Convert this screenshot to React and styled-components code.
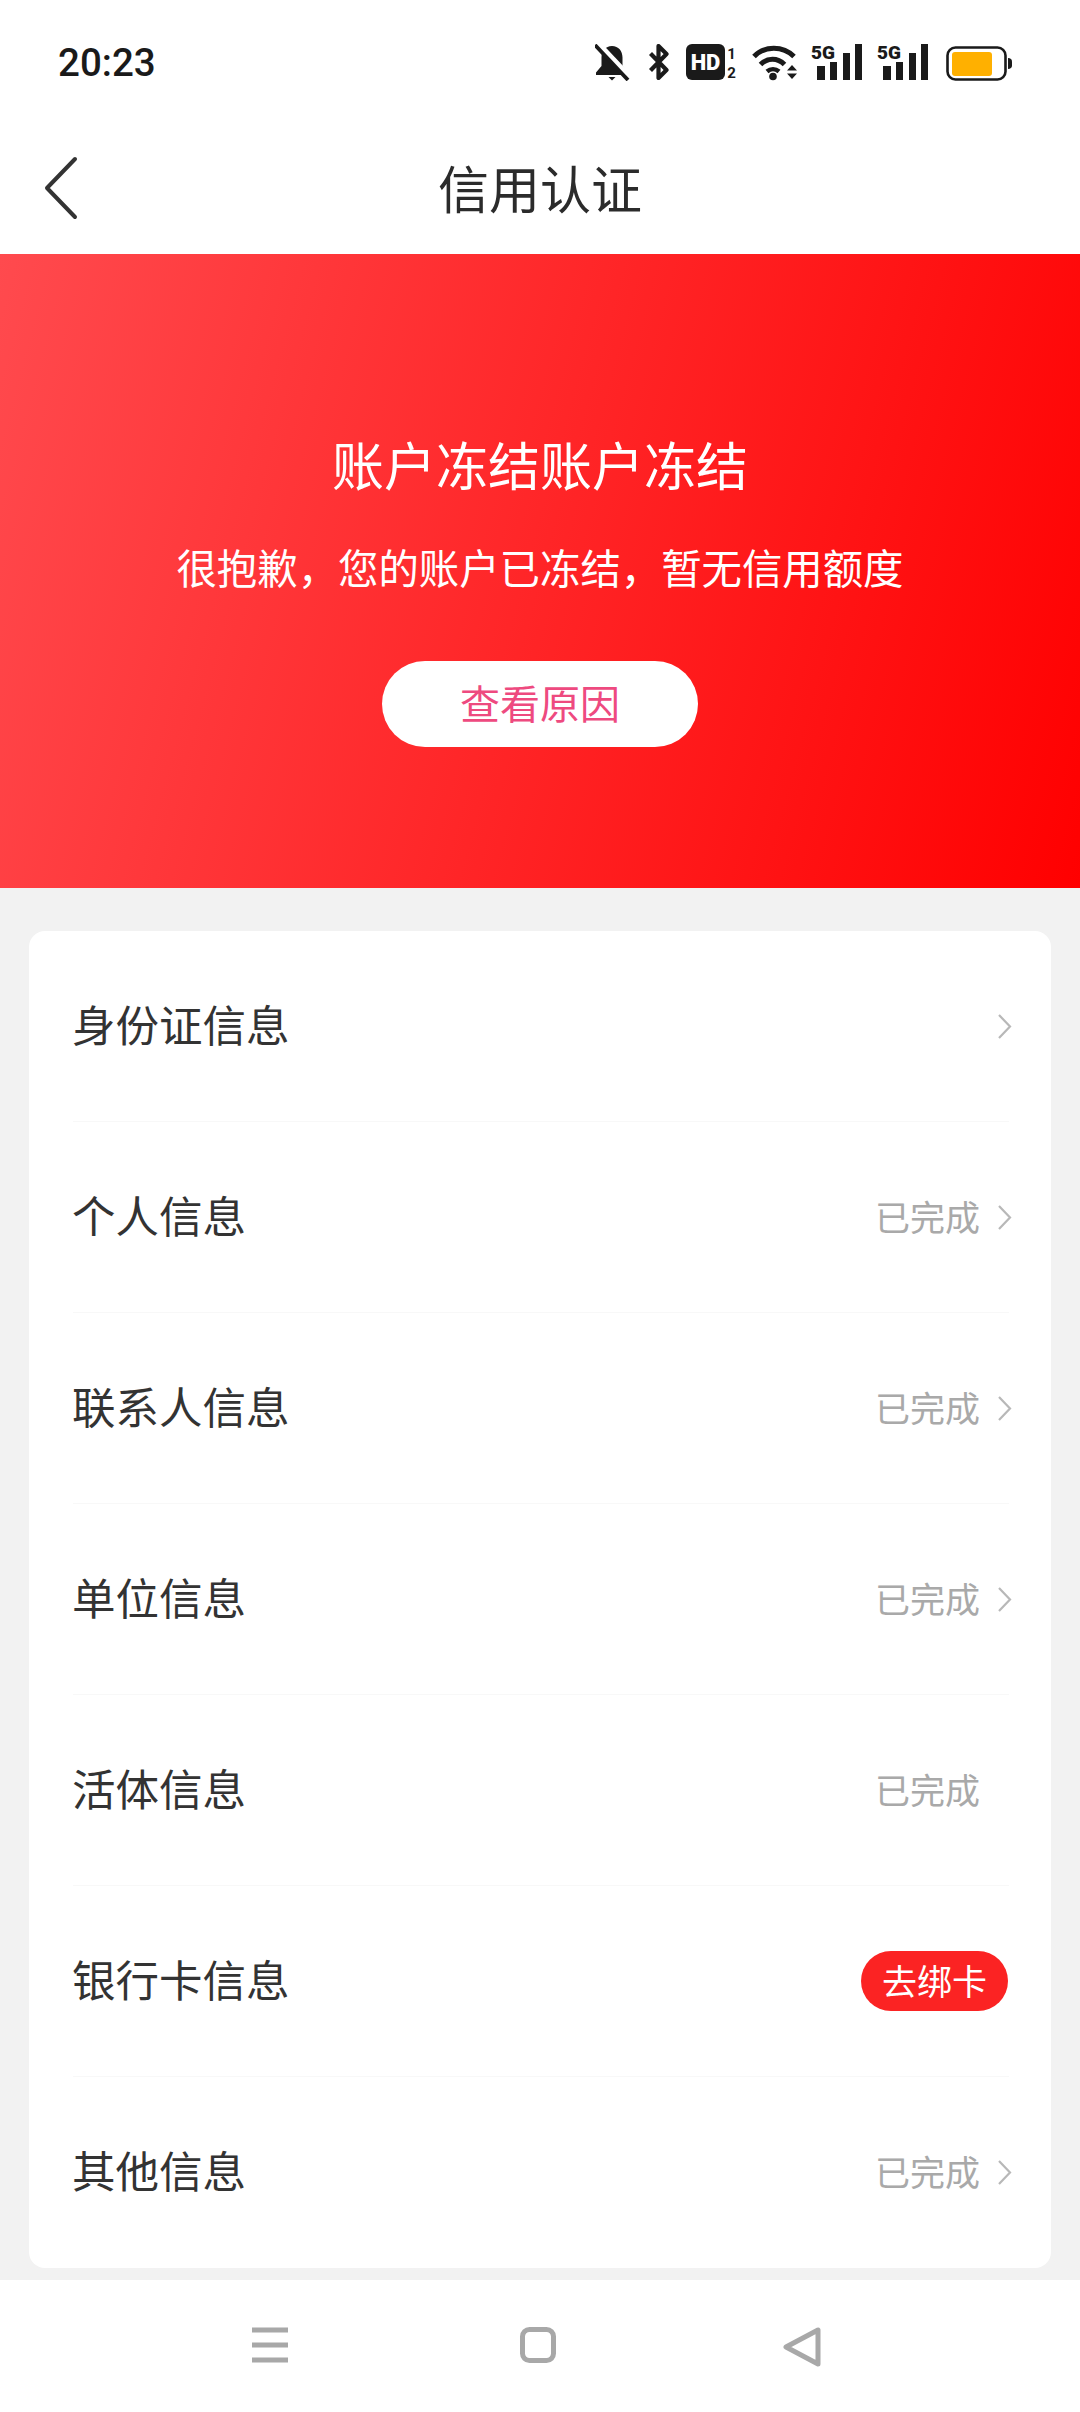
import React from "react";
import styled, { createGlobalStyle } from "styled-components";

const rows = [
  { label: "身份证信息", arrow: true },
  { label: "个人信息", value: "已完成", arrow: true },
  { label: "联系人信息", value: "已完成", arrow: true },
  { label: "单位信息", value: "已完成", arrow: true },
  { label: "活体信息", value: "已完成", arrow: false },
  { label: "银行卡信息", pill: "去绑卡" },
  { label: "其他信息", value: "已完成", arrow: true },
];

const GlobalStyle = createGlobalStyle`
  html, body {
    margin: 0;
    padding: 0;
    background: #f2f2f2;
  }
  * {
    box-sizing: border-box;
  }
`;

const Page = styled.div`
  width: 1080px;
  height: 2412px;
  display: flex;
  flex-direction: column;
  background: #f2f2f2;
  font-family: "Noto Sans CJK SC", "Noto Sans", sans-serif;
  overflow: hidden;
`;

const StatusBar = styled.div`
  height: 126px;
  flex: none;
  background: #fff;
  display: flex;
  justify-content: space-between;
  align-items: flex-start;
  padding: 39px 68px 0 58px;
`;

const Clock = styled.span`
  font-family: Roboto, "Liberation Sans", sans-serif;
  font-size: 38.5px;
  font-weight: 500;
  line-height: 48px;
  color: #1a1a1a;
`;

const StatusIcons = styled.div`
  display: flex;
  align-items: flex-start;
  margin-top: 5px;
`;

const StatusIcon = styled.svg`
  display: block;
  flex: none;
  margin-left: ${(p) => p.$gap || 0}px;
  margin-top: ${(p) => p.$lift || 0}px;
`;

const NavBar = styled.header`
  height: 128px;
  flex: none;
  background: #fff;
  position: relative;
  display: flex;
  align-items: center;
  justify-content: center;
`;

const BackButton = styled.svg`
  position: absolute;
  left: 43px;
  top: 30px;
`;

const NavTitle = styled.h1`
  margin: 0;
  padding-bottom: 6px;
  font-size: 51px;
  font-weight: 400;
  line-height: 70px;
  color: #2b2b2b;
`;

const Banner = styled.section`
  height: 634px;
  flex: none;
  display: flex;
  flex-direction: column;
  align-items: center;
  padding-top: 177px;
  background: linear-gradient(105deg, #ff4a4e 0%, #ff0000 100%);
`;

const BannerTitle = styled.h2`
  margin: 0;
  font-size: 52px;
  font-weight: 400;
  line-height: 66px;
  color: #fff;
`;

const BannerText = styled.p`
  margin: 42px 0 0;
  font-size: 40.4px;
  line-height: 56px;
  color: #fff;
`;

const ReasonButton = styled.button`
  margin-top: 66px;
  width: 316px;
  height: 86px;
  border: none;
  border-radius: 43px;
  background: #fff;
  color: #ee4a7f;
  font-family: inherit;
  font-size: 40px;
  padding: 0 0 4px;
`;

const Card = styled.div`
  margin: 43px 29px 0;
  padding: 0 42px 0 44px;
  height: 1337px;
  flex: none;
  background: #fff;
  border-radius: 16px;
`;

const Row = styled.div`
  height: 191px;
  display: flex;
  align-items: center;
  justify-content: space-between;
  border-bottom: ${(p) => (p.$last ? "none" : "1px solid #f8f8f8")};
`;

const RowLabel = styled.span`
  margin: 0 0 5px -1px;
  font-size: 43.5px;
  line-height: 60px;
  color: #333;
`;

const RowRight = styled.div`
  display: flex;
  align-items: center;
`;

const RowValue = styled.span`
  margin-bottom: 3px;
  font-size: 35px;
  line-height: 48px;
  color: #a9a9a9;
`;

const ArrowSlot = styled.span`
  width: 32px;
  display: flex;
  justify-content: flex-end;
  margin-right: -3px;
`;

const Pill = styled.span`
  width: 147px;
  height: 60px;
  margin-right: 1px;
  padding-bottom: 3px;
  border-radius: 30px;
  background: #fb2323;
  color: #fff;
  font-size: 35px;
  display: flex;
  align-items: center;
  justify-content: center;
`;

const BottomBar = styled.nav`
  margin-top: 12px;
  flex: 1;
  background: #fff;
  display: flex;
  align-items: flex-start;
  padding: 47px 0 0 252px;
`;

const BottomIcon = styled.svg`
  display: block;
  flex: none;
  margin-left: ${(p) => p.$gap || 0}px;
`;

const MutedBell = () => (
  <StatusIcon width="35" height="37" viewBox="0 0 35 37">
    <path d="M17 2c6.500 0 10.500 5 10.500 11.500V22l5.500 6.500V31H1v-2.500L6.500 22v-8.500C6.500 7 10.500 2 17 2z" fill="#1a1a1a" />
    <path d="M13.500 33h7L17 36.500z" fill="#1a1a1a" />
    <path d="M3 -1l33 35" stroke="#fff" strokeWidth="5" />
    <path d="M0 1l33 35" stroke="#1a1a1a" strokeWidth="3.800" />
  </StatusIcon>
);

const Bluetooth = () => (
  <StatusIcon $gap={18} width="21" height="36" viewBox="0 0 21 36">
    <path d="M2.500 9.500l16 16.500-8 8V2l8 8-16 16.500" fill="none" stroke="#1a1a1a" strokeWidth="4.200" strokeLinejoin="round" />
  </StatusIcon>
);

const HdBadge = () => (
  <StatusIcon $gap={17} width="50" height="37" viewBox="0 0 50 37">
    <rect x="0" y="0" width="39" height="36" rx="6" fill="#1a1a1a" />
    <text x="19.500" y="26" textAnchor="middle" fontFamily="Roboto, sans-serif" fontWeight="900" fontSize="22" fill="#fff">HD</text>
    <text x="45.500" y="15" textAnchor="middle" fontFamily="Roboto, sans-serif" fontWeight="700" fontSize="15" fill="#1a1a1a">1</text>
    <text x="45.500" y="34" textAnchor="middle" fontFamily="Roboto, sans-serif" fontWeight="700" fontSize="15" fill="#1a1a1a">2</text>
  </StatusIcon>
);

const Wifi = () => (
  <StatusIcon $gap={16} width="45" height="37" viewBox="0 0 45 37">
    <path d="M2 12.500C12.500 1.500 31 1.500 42 12.500" fill="none" stroke="#1a1a1a" strokeWidth="5" />
    <path d="M8.500 20.500c7-7 17-7 24 0" fill="none" stroke="#1a1a1a" strokeWidth="5" />
    <path d="M15 27.500c3.500-3 8.500-3 12 0" fill="none" stroke="#1a1a1a" strokeWidth="4.500" />
    <circle cx="21" cy="32.500" r="3.800" fill="#1a1a1a" />
    <path d="M35 26.500l5-5.500 5 5.500zM35 29.500h10l-5 5.500z" fill="#1a1a1a" />
  </StatusIcon>
);

const Signal = ({ gap }) => (
  <StatusIcon $gap={gap} $lift={-3} width="51" height="40" viewBox="0 0 51 40">
    <text x="0" y="18" fontFamily="Roboto, sans-serif" fontWeight="900" fontSize="19" fill="#1a1a1a">5G</text>
    <rect x="6" y="25" width="8" height="14" fill="#1a1a1a" />
    <rect x="19" y="21" width="7" height="18" fill="#1a1a1a" />
    <rect x="32" y="12" width="7" height="27" fill="#1a1a1a" />
    <rect x="44" y="3" width="7" height="36" fill="#1a1a1a" />
  </StatusIcon>
);

const Battery = () => (
  <StatusIcon $gap={18} width="66" height="38" viewBox="0 0 66 38">
    <rect x="1.500" y="3.500" width="58" height="32" rx="8" fill="none" stroke="#1a1a1a" strokeWidth="2.600" />
    <rect x="6" y="8" width="40" height="24" rx="3" fill="#ffb000" />
    <path d="M62 14c2.500 0 4 1.500 4 3.500v4c0 2-1.500 3.500-4 3.500z" fill="#1a1a1a" />
  </StatusIcon>
);

const Chevron = () => (
  <svg width="15" height="27" viewBox="0 0 15 27">
    <path d="M2 2l11 11.500L2 25" fill="none" stroke="#b8b8b8" strokeWidth="2.200" />
  </svg>
);

const App = () => {
  return (
    <Page>
      <GlobalStyle />
      <StatusBar>
        <Clock>20:23</Clock>
        <StatusIcons>
          <MutedBell />
          <Bluetooth />
          <HdBadge />
          <Wifi />
          <Signal gap={14} />
          <Signal gap={15} />
          <Battery />
        </StatusIcons>
      </StatusBar>

      <NavBar>
        <BackButton width="36" height="64" viewBox="0 0 36 64">
          <path d="M32 3L4 32l28 29" fill="none" stroke="#333" strokeWidth="4" strokeLinecap="round" strokeLinejoin="round" />
        </BackButton>
        <NavTitle>信用认证</NavTitle>
      </NavBar>

      <Banner>
        <BannerTitle>账户冻结账户冻结</BannerTitle>
        <BannerText>很抱歉，您的账户已冻结，暂无信用额度</BannerText>
        <ReasonButton>查看原因</ReasonButton>
      </Banner>

      <Card>
        {rows.map((row, i) => (
          <Row key={row.label} $last={i === rows.length - 1}>
            <RowLabel>{row.label}</RowLabel>
            <RowRight>
              {row.value && <RowValue>{row.value}</RowValue>}
              {row.pill ? (
                <Pill>{row.pill}</Pill>
              ) : (
                <ArrowSlot>{row.arrow && <Chevron />}</ArrowSlot>
              )}
            </RowRight>
          </Row>
        ))}
      </Card>

      <BottomBar>
        <BottomIcon width="36" height="36" viewBox="0 0 36 36">
          <path d="M0 3h36M0 18h36M0 33h36" stroke="#a8a8a8" strokeWidth="5" />
        </BottomIcon>
        <BottomIcon $gap={232} width="36" height="36" viewBox="0 0 36 36">
          <rect x="2.500" y="2.500" width="31" height="31" rx="7" fill="none" stroke="#a8a8a8" strokeWidth="5" />
        </BottomIcon>
        <BottomIcon $gap={227} width="38" height="40" viewBox="0 0 38 40">
          <path d="M35 3v34L3 20z" fill="none" stroke="#a8a8a8" strokeWidth="5" strokeLinejoin="round" />
        </BottomIcon>
      </BottomBar>
    </Page>
  );
};

export default App;
